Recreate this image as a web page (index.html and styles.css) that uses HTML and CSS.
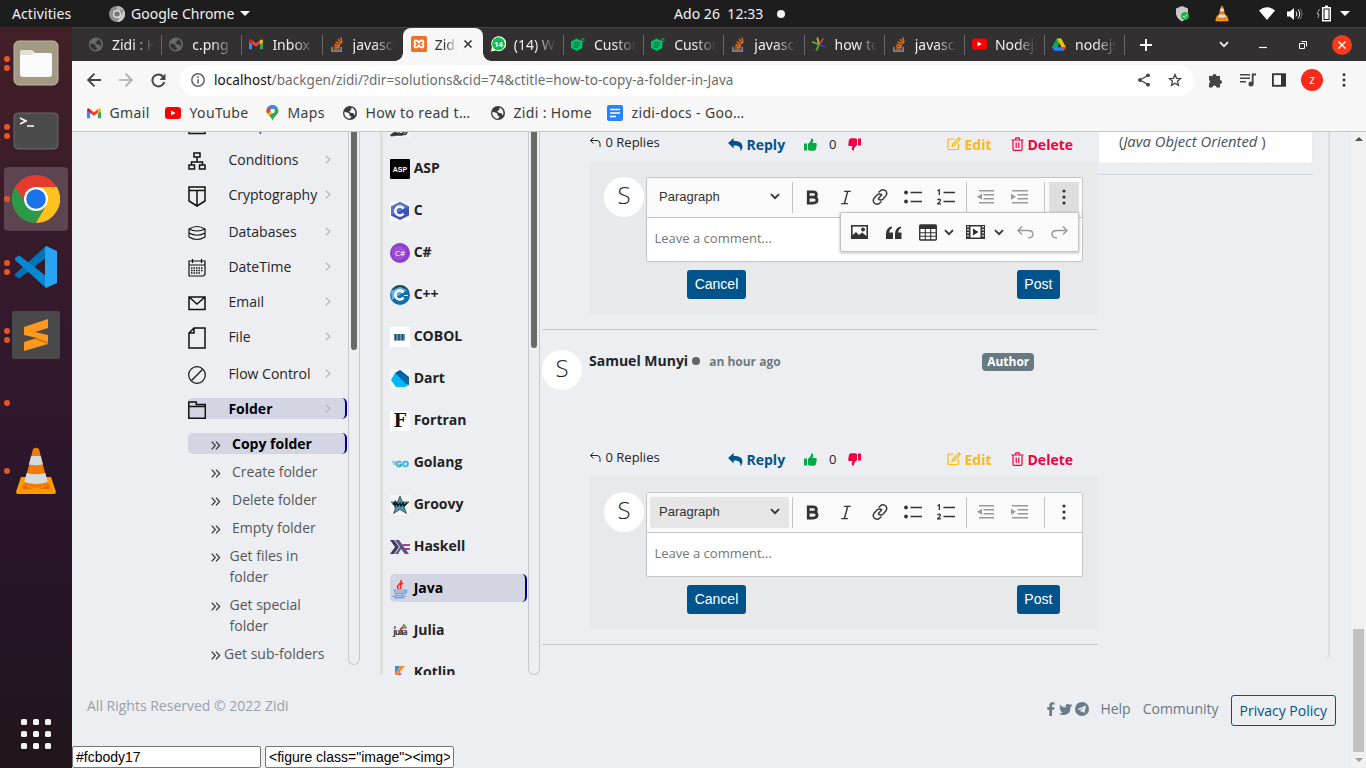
FILE: index.html
```html
<!DOCTYPE html>
<html lang="en">
<head>
<meta charset="utf-8">
<title>Zidi : Home</title>
<link rel="stylesheet" href="styles.css">
</head>
<body>
<svg class="defs" aria-hidden="true">
  <symbol id="globe" viewBox="0 0 16 16"><circle cx="8" cy="8" r="8" fill="currentColor"/><path d="M2 6.500C4 7.500 5.500 7 7 8.500S6 11 8.500 11.500 8 14 8 14.500A6.500 6.500 0 0 1 1.600 7zM10 1.800C9 4 10 4.500 8 5.500S9 8 11 8s1 2.500 2.500 2.500A6.500 6.500 0 0 0 10 1.800z" fill="var(--hole)"/></symbol>
  <symbol id="gmail" viewBox="0 0 16 12"><path d="M0 2v9.500h3.500V5z" fill="#4285f4"/><path d="M16 2v9.500h-3.500V5z" fill="#34a853"/><path d="M0 2Q0 0 2 0l6 4.500L14 0v4L8 8.500 0 3z" fill="#ea4335"/><path d="M12.500 1q3.500-2 3.500 1.500v1L12.500 6z" fill="#fbbc04"/><path d="M0 2.500L3.500 5V2L1 .300z" fill="#c5221f"/></symbol>
  <symbol id="youtube" viewBox="0 0 16 12"><rect width="16" height="12" rx="3" fill="red"/><path d="M6 3.500v5L10.500 6z" fill="#fff"/></symbol>
  <symbol id="stack" viewBox="0 0 14 16"><path d="M1.500 10.500v4.500h10v-4.500" fill="none" stroke="#9aa0a6" stroke-width="1.300"/><path d="M3.500 13h6M3.700 10.500l6 .700M4.300 8l5.800 1.600M5.500 5l5.200 3M8 2.300l3.800 4.700M11 .500l1.500 5.500" stroke="#f4701c" stroke-width="1.400"/></symbol>
  <symbol id="hex" viewBox="0 0 16 16"><path d="M6.500 1L13 4.500v7.500L6.500 15.500 0 12V4.500z" fill="#00c167"/><path d="M3 6h7M3 8.500h7M3 11h5" stroke="#0b6b40" stroke-width="1.200"/><circle cx="13.500" cy="3" r="1.700" fill="none" stroke="#00c167"/></symbol>
  <symbol id="cone" viewBox="0 0 42 48"><path d="M6 30h30l5 15q0 2-2 2H3q-2 0-2-2z" fill="#ff9a00"/><path d="M8 37q13 10 26 0l1 5H7z" fill="#e86a00"/><path d="M18 2q3-2.500 6 0l9 36q-12 6-24 0z" fill="#f07c00"/><path d="M16.200 9h9.600l2.100 8.500q-7 1.500-14 0z" fill="#d5dade"/><path d="M11.700 26q9.500 2.500 18.600 0l2.500 9q-12 4-23.600 0z" fill="#d5dade"/></symbol>
  <symbol id="chev" viewBox="0 0 6 10"><path d="M.500.700L5 5 .500 9.300" fill="none" stroke="currentColor" stroke-width="1.300"/></symbol>
  <symbol id="caret" viewBox="0 0 10 7"><path d="M1 1.200l4 4 4-4" fill="none" stroke="currentColor" stroke-width="1.800"/></symbol>
  <symbol id="dbl" viewBox="0 0 10 9"><path d="M.700.700L4.300 4.500.700 8.300M5 .700l3.600 3.800L5 8.300" fill="none" stroke="currentColor" stroke-width="1.200"/></symbol>
  <symbol id="turn" viewBox="0 0 11 11"><path d="M3.500.500l-3 3 3 3M.500 3.500h6.500q3 0 3 3V10" fill="none" stroke="currentColor" stroke-width="1"/></symbol>
  <symbol id="reply" viewBox="0 0 16 14"><path d="M0 5.500L6 0v3.300c6 0 9.500 1.700 9.500 6 0 2-1 3.700-2.300 4.600C14 10 12 8 6 8v3.200z" fill="currentColor"/></symbol>
  <symbol id="thumb" viewBox="0 0 13 13"><path d="M0 5.500h3v7H0zM4 6l3-3.300V.600q2.300-.500 2.300 2L8.500 5H12q1.200.600.600 2l-.400 3.500q-.500 2-2 2.200H6L4 12z" fill="currentColor"/></symbol>
  <symbol id="edit" viewBox="0 0 14 14"><path d="M7 2H2q-1 0-1 1v8.500q0 1 1 1h8.500q1 0 1-1V7M11.800.800l1.500 1.400L7 8.700l-2 .600.600-2z" fill="none" stroke="currentColor" stroke-width="1.200"/></symbol>
  <symbol id="trash" viewBox="0 0 13 14"><path d="M.500 3h12M2 3v9.300q0 1 1 1h7q1 0 1-1V3M4.200 3L5 .800h3L8.800 3M5.200 5.500V11M7.800 5.500V11" fill="none" stroke="currentColor" stroke-width="1.200"/></symbol>
  <symbol id="bold" viewBox="0 0 14 16"><path d="M3 2.800h4.300q3.400 0 3.400 2.500 0 2.200-3.200 2.300H3.500h4.300q3.500.200 3.500 2.800 0 2.800-3.800 2.800H3z" fill="none" stroke="currentColor" stroke-width="2.600"/></symbol>
  <symbol id="italic" viewBox="0 0 12 16"><path d="M4 1.500h7M1 14.500h7M7.800 1.500L4.300 14.500" fill="none" stroke="currentColor" stroke-width="1.500"/></symbol>
  <symbol id="link" viewBox="0 0 16 16"><path d="M6.500 3.500L8.500 1.700Q11.500-.300 14 2.300q1.700 2.500-.300 4.700l-2.500 3q-2.500 2-5 0M9.500 12.500l-2 1.800q-3 2-5.500-.600-1.700-2.500.300-4.700L5 6q2.500-2 5 0M6 10l4-4.500" fill="none" stroke="currentColor" stroke-width="1.400"/></symbol>
  <symbol id="bul" viewBox="0 0 18 14"><circle cx="2" cy="2.500" r="1.900" fill="currentColor"/><circle cx="2" cy="11.500" r="1.900" fill="currentColor"/><path d="M6.500 2.500H18M6.500 11.500H18" stroke="currentColor" stroke-width="1.500"/></symbol>
  <symbol id="num" viewBox="0 0 18 16"><path d="M6.500 3.500H18M6.500 12.500H18" stroke="currentColor" stroke-width="1.500"/><path d="M.500 1.800L2.300.800V6M.500 11q1.800-1.800 3 0 0 1.500-3 3.800h3.500" fill="none" stroke="currentColor" stroke-width="1.300"/></symbol>
  <symbol id="outd" viewBox="0 0 18 14"><path d="M2 .800h15M6.500 4.800H17M6.500 8.800H17M2 12.800h15" stroke="currentColor" stroke-width="1.400"/><path d="M5 3.800v6L0 6.800z" fill="currentColor"/></symbol>
  <symbol id="ind" viewBox="0 0 18 14"><path d="M1 .800h16M6.500 4.800H17M6.500 8.800H17M1 12.800h16" stroke="currentColor" stroke-width="1.400"/><path d="M0 3.800v6l5-3z" fill="currentColor"/></symbol>
  <symbol id="dots" viewBox="0 0 4 16"><circle cx="2" cy="2" r="1.600" fill="currentColor"/><circle cx="2" cy="8" r="1.600" fill="currentColor"/><circle cx="2" cy="14" r="1.600" fill="currentColor"/></symbol>
  <symbol id="undo" viewBox="0 0 17 13"><path d="M5 .500L1 4.500l4 4M1 4.500h10q5 0 5 3.700t-5 3.700" fill="none" stroke="currentColor" stroke-width="1.400"/></symbol>
</svg>

<header class="topbar">
  <span class="activities">Activities</span>
  <svg class="app-icon" viewBox="0 0 16 16"><circle cx="8" cy="8" r="8" fill="#8f8f8f"/><path d="M8 0a8 8 0 0 1 7 4H8z" fill="#b5b5b5"/><path d="M15 4a8 8 0 0 1-7 12l3.500-6z" fill="#c8c8c8"/><circle cx="8" cy="8" r="3.900" fill="#eee"/><circle cx="8" cy="8" r="2.800" fill="#777"/></svg>
  <span class="app-name">Google Chrome</span>
  <i class="tri"></i>
  <span class="clock">Ado 26&nbsp; 12:33</span><i class="notif"></i>
  <div class="tray">
    <svg width="14" height="16" viewBox="0 0 14 16"><path d="M6 0l6 2.500V8q-1 5-6 7.500Q1 13 0 8V2.500z" fill="#c9c9c9"/><circle cx="9" cy="10" r="4" fill="#26b04b"/><path d="M7 10l1.500 1.500L11 8.500" stroke="#fff" fill="none"/></svg>
    <svg width="14" height="17"><use href="#cone"/></svg>
    <svg width="16" height="13" viewBox="0 0 16 13"><path d="M0 3.500Q8-3 16 3.500L8 13z" fill="#fff"/></svg>
    <svg width="16" height="14" viewBox="0 0 16 14"><path d="M0 4.500h3L7 1v12L3 9.500H0z" fill="#fff"/><path d="M9 4.500q2 2.500 0 5M11 2.500q3.500 4.500 0 9" stroke="#fff" fill="none"/><path d="M13 1.500q4 5.500 0 11" stroke="#777" fill="none"/></svg>
    <svg width="15" height="17" viewBox="0 0 15 17"><path d="M3.500 4L1 9h2l-1 4" stroke="#aaa" fill="none"/><path d="M6.700 2.700h7.600v13H6.700zM9 1.200h3" stroke="#fff" stroke-width="1.500" fill="none"/><path d="M8.500 4.500h4v9.500h-4z" fill="#fff"/></svg>
    <i class="tri"></i>
  </div>
</header>

<div class="desktop">
  <nav class="dock">
    <div class="app"><span class="run"><i></i><i></i></span><svg width="46" height="46" viewBox="0 0 46 46"><rect x="1" y="1" width="44" height="44" rx="5" fill="#a29a82" stroke="#c0b9a2"/><path d="M7 12q0-2 2-2h10l3 3h15q2 0 2 2v5H7z" fill="#e4e0d3"/><path d="M7 17q0-2 2-2h9l4-2h15q2 0 2 2v19q0 3-3 3H10q-3 0-3-3z" fill="#fafafa"/></svg></div>
    <div class="app"><span class="run"><i></i><i></i></span><svg width="46" height="38" viewBox="0 0 46 38"><rect x="1" y="1" width="44" height="36" rx="4" fill="#4b4b4b" stroke="#6b6b6b"/><path d="M7 6l6 3-6 3M14 14h7" stroke="#fff" stroke-width="1.600" fill="none"/></svg></div>
    <div class="app current"><span class="run"><i></i></span><svg width="48" height="48" viewBox="0 0 48 48"><circle cx="24" cy="24" r="24" fill="#e33b2e"/><path d="M3.200 12A24 24 0 0 0 24 48l10-18-10 4-10-5z" fill="#2b9a48"/><path d="M24 12h20.800A24 24 0 0 1 24 48l10.400-18z" fill="#fcc31e"/><circle cx="24" cy="24" r="12" fill="#fff"/><circle cx="24" cy="24" r="9.800" fill="#1a73e8"/></svg></div>
    <div class="app"><span class="run"><i></i><i></i></span><svg width="42" height="42" viewBox="0 0 42 42"><path d="M31 0L0 28q-1 1 0 2l3 2q1 1 2 0L31 12z" fill="#0070b8"/><path d="M31 42L0 14q-1-1 0-2l3-2q1-1 2 0l26 20z" fill="#0788d2"/><path d="M31 0l11 5v32l-11 5-1-2V2z" fill="#27a5f2"/></svg></div>
    <div class="app"><span class="run"><i></i><i></i></span><svg width="48" height="48" viewBox="0 0 48 48"><rect width="48" height="48" rx="2" fill="#494949"/><path d="M12 16l24-8v9l-13 4 13 3v9l-24 7v-9l13-4-13-3z" fill="#ff9820"/><path d="M25 27l11 4v2l-14-5z" fill="#d97706"/></svg></div>
    <div class="app"><span class="run"><i></i></span></div>
    <div class="app"><span class="run"><i></i></span><svg width="42" height="48"><use href="#cone"/></svg></div>
    <div class="launcher"><i></i><i></i><i></i><i></i><i></i><i></i><i></i><i></i><i></i></div>
  </nav>

  <div class="browser">
    <div class="tabs">
      <div class="tab grey"><svg><use href="#globe"/></svg><span>Zidi : Home</span></div>
      <div class="tab grey"><svg><use href="#globe"/></svg><span>c.png</span></div>
      <div class="tab"><svg><use href="#gmail"/></svg><span>Inbox (1)</span></div>
      <div class="tab nosep"><svg><use href="#stack"/></svg><span>javascript</span></div>
      <div class="tab active"><svg viewBox="0 0 16 16"><rect width="16" height="16" rx="1.500" fill="#f0702a"/><path d="M4.500 4.500Q6.500 4.200 8 6.500 9.500 4.200 11.500 4.500q2 1.500 0 3.500 2 2 0 3.500Q9.500 11.800 8 9.500 6.500 11.800 4.500 11.500q-2-1.500 0-3.500-2-2 0-3.500z" fill="none" stroke="#fff" stroke-width="1.800"/></svg><span>Zidi</span><svg class="x" viewBox="0 0 10 10"><path d="M1.500 1.500l7 7m0-7l-7 7" stroke="#333" stroke-width="1.600"/></svg></div>
      <div class="tab"><svg viewBox="0 0 16 16" class="wide"><path d="M0 16l1-5A8 8 0 1 1 5 15z" fill="#fff"/><circle cx="8" cy="7.800" r="6.900" fill="#0fc144"/><text x="8" y="10.800" text-anchor="middle" class="wa">14</text></svg><span>(14) Wh</span></div>
      <div class="tab"><svg><use href="#hex"/></svg><span>Custom</span></div>
      <div class="tab"><svg><use href="#hex"/></svg><span>Custom</span></div>
      <div class="tab"><svg><use href="#stack"/></svg><span>javascript</span></div>
      <div class="tab"><svg viewBox="0 0 16 16"><path d="M8 8L0 5" stroke="#5ea84a" stroke-width="2"/><path d="M8 8l5-7" stroke="#b9415c" stroke-width="2"/><path d="M8 8L6 0" stroke="#c4b13d" stroke-width="2"/><path d="M8 8l7 3" stroke="#513a99" stroke-width="2"/><path d="M8 8l-3 7" stroke="#4f9d38" stroke-width="2.500"/></svg><span>how to c</span></div>
      <div class="tab"><svg><use href="#stack"/></svg><span>javascript</span></div>
      <div class="tab"><svg class="wide"><use href="#youtube"/></svg><span>Nodejs</span></div>
      <div class="tab"><svg viewBox="0 0 16 14"><path d="M5.500 0h5L5 14 0 10z" fill="#0fa757"/><path d="M5.500 0h5L16 10h-5z" fill="#fbbc04"/><path d="M0 10h16l-2.700 4H2.700z" fill="#2684fc"/><path d="M11 10h5l-2.700 4z" fill="#ea4335"/></svg><span>nodejs</span></div>
      <div class="newtab"><svg width="12" height="12" viewBox="0 0 12 12"><path d="M6 0v12M0 6h12" stroke="#fff" stroke-width="1.900"/></svg></div>
      <div class="winctl">
        <svg width="10" height="7"><use href="#caret"/></svg>
        <svg width="8" height="8" viewBox="0 0 8 8"><path d="M0 6.500h8" stroke="#fff" stroke-width="1.200"/></svg>
        <svg width="8" height="8" viewBox="0 0 8 8"><path d="M.500 2.500h5v5h-5zM2.500.500h5v5" stroke="#fff" fill="none"/></svg>
        <span class="close"><svg width="8" height="8" viewBox="0 0 8 8"><path d="M.500.500l7 7m0-7l-7 7" stroke="#fff" stroke-width="1.400"/></svg></span>
      </div>
    </div>
    <div class="toolbar">
      <svg width="14" height="14" viewBox="0 0 14 14"><path d="M14 7H1.500M7.500.700L1.200 7l6.300 6.300" stroke="#444" stroke-width="1.900" fill="none"/></svg>
      <svg width="14" height="14" viewBox="0 0 14 14"><path d="M0 7h12.500M6.500.700L12.800 7l-6.300 6.300" stroke="#a8a8a8" stroke-width="1.700" fill="none"/></svg>
      <svg width="15" height="15" viewBox="0 0 15 15"><path d="M13.200 9A6 6 0 1 1 12 3.500L13 4.800" stroke="#444" stroke-width="2" fill="none"/><path d="M14.500.500V7H8.500z" fill="#444"/></svg>
      <div class="omni">
        <svg width="14" height="14" viewBox="0 0 14 14"><circle cx="7" cy="7" r="6.200" fill="none" stroke="#5f6368" stroke-width="1.500"/><path d="M7 6.200v4.300M7 3.300V5" stroke="#5f6368" stroke-width="1.600"/></svg>
        <span class="url"><b>localhost</b>/backgen/zidi/?dir=solutions&amp;cid=74&amp;ctitle=how-to-copy-a-folder-in-Java</span>
        <svg width="12" height="14" viewBox="0 0 12 14"><path d="M10 2.500L2 7l8 4.500" stroke="#444" stroke-width="1.300" fill="none"/><circle cx="10" cy="2.300" r="1.900" fill="#444"/><circle cx="2" cy="7" r="1.900" fill="#444"/><circle cx="10" cy="11.700" r="1.900" fill="#444"/></svg>
        <svg width="14" height="14" viewBox="0 0 14 14"><path d="M7 1.500l1.600 3.800 4.100.300-3.200 2.700 1 4L7 10.200l-3.500 2.100 1-4L1.300 5.600l4.100-.300z" stroke="#444" stroke-width="1.300" fill="none"/></svg>
      </div>
      <div class="tools">
        <svg width="15" height="15" viewBox="0 0 15 15"><path d="M1 3h3.500a2 2 0 1 1 4 0H12v4a2 2 0 1 1 0 4v3.500H8.500a2 2 0 0 0-4 0H1v-4a2 2 0 0 0 0-3.500z" fill="#444"/></svg>
        <svg width="16" height="14" viewBox="0 0 16 14"><path d="M0 1.800h10M0 5.300h10M0 8.800h6" stroke="#444" stroke-width="1.600"/><path d="M12.700 11V1.500H16" stroke="#444" stroke-width="1.800" fill="none"/><circle cx="11" cy="11" r="2.500" fill="#444"/></svg>
        <svg width="14" height="14" viewBox="0 0 14 14"><rect x=".9" y="1.200" width="12.200" height="11.600" fill="none" stroke="#333" stroke-width="1.800"/><path d="M9 1h4.500v12H9z" fill="#333"/></svg>
        <span class="me">z</span>
        <svg class="dk" width="4" height="14"><use href="#dots"/></svg>
      </div>
    </div>
    <div class="bookmarks">
      <span><svg width="14" height="11"><use href="#gmail"/></svg><b>Gmail</b></span>
      <span><svg width="16" height="12"><use href="#youtube"/></svg><b>YouTube</b></span>
      <span><svg width="13" height="16" viewBox="0 0 12 16"><path d="M6 0a6 6 0 0 1 6 6c0 4-5 5-6 10C5 11 0 10 0 6a6 6 0 0 1 6-6z" fill="#34a853"/><path d="M6 0a6 6 0 0 0-4.600 2.100L6 6l4-4.500A6 6 0 0 0 6 0z" fill="#4285f4"/><path d="M1.400 2.100A6 6 0 0 0 .600 8.500L6 6z" fill="#ea4335"/><path d="M.600 8.500L2.600 11.400 9.500 3.400 6 6z" fill="#fbbc04"/><circle cx="6" cy="6" r="2.200" fill="#fff"/></svg><b>Maps</b></span>
      <span><svg width="14" height="14"><use href="#globe"/></svg><b>How to read t…</b></span>
      <span><svg width="14" height="14"><use href="#globe"/></svg><b>Zidi : Home</b></span>
      <span><svg width="16" height="16" viewBox="0 0 16 16"><rect width="16" height="16" rx="2" fill="#2684fc"/><path d="M3 4.500h10M3 8h10M3 11.500h6" stroke="#fff" stroke-width="1.600"/></svg><b>zidi-docs - Goo…</b></span>
    </div>

    <div class="viewport">
      <div class="page">
        <main class="main">
          <aside class="cats">
            <ul class="catlist">
              <li class="g14"><svg class="ci" viewBox="0 0 18 24"><path d="M1 8h16v11.500H1z" class="st"/></svg><span>Comparison</span></li>
              <li class="g14"><svg class="ci" viewBox="0 0 18 24"><path d="M6 4h6v4H6zM9 8v4M3.500 16v-3h11v3M9 12v1M1 16h5.500v4H1zM11.500 16H17v4h-5.500z" class="st"/></svg><span>Conditions</span><svg class="cv"><use href="#chev"/></svg></li>
              <li class="g16"><svg class="ci" viewBox="0 0 18 24"><path d="M1 3h16v14l-8 5-8-5zM1 6.500h16M9 6.500V22" class="st"/></svg><span>Cryptography</span><svg class="cv"><use href="#chev"/></svg></li>
              <li class="g14"><svg class="ci" viewBox="0 0 18 24"><path d="M1 8q8-5 16 0v8q-8 5-16 0zM1 8q8 4 16 0M1 12q8 4.500 16 0" class="st thin"/></svg><span>Databases</span><svg class="cv"><use href="#chev"/></svg></li>
              <li class="g14"><svg class="ci" viewBox="0 0 18 24"><path d="M1 5h16v13.500l-1.500 1.500H1zM1 9h16M4.500 3v4M13.500 3v4" class="st thin"/><path d="M3 12h12.500M3 14.500h12.500M3 17h9" class="st" stroke-dasharray="1.500 1"/></svg><span>DateTime</span><svg class="cv"><use href="#chev"/></svg></li>
              <li class="g14"><svg class="ci" viewBox="0 0 18 24"><path d="M1 6h16v12.500H1zM1 6l8 7 8-7" class="st"/></svg><span>Email</span><svg class="cv"><use href="#chev"/></svg></li>
              <li class="g16"><svg class="ci" viewBox="0 0 18 24"><path d="M6 2h11v20H1V7zM6 2v5H1" class="st"/></svg><span>File</span><svg class="cv"><use href="#chev"/></svg></li>
              <li class="g14"><svg class="ci" viewBox="0 0 18 24"><circle cx="9" cy="12" r="8.300" class="st thin"/><path d="M3.500 17.500l11-11" class="st thin"/></svg><span>Flow Control</span><svg class="cv"><use href="#chev"/></svg></li>
              <li class="g14 on"><svg class="ci" viewBox="0 0 18 24"><path d="M.800 20.200V4h7.500v2.500h9v13.700zM.800 8.500h16.500" class="st"/></svg><span>Folder</span><svg class="cv"><use href="#chev"/></svg></li>
            </ul>
            <ul class="sublist">
              <li class="on"><svg><use href="#dbl"/></svg><span>Copy folder</span></li>
              <li><svg><use href="#dbl"/></svg><span>Create folder</span></li>
              <li><svg><use href="#dbl"/></svg><span>Delete folder</span></li>
              <li><svg><use href="#dbl"/></svg><span>Empty folder</span></li>
              <li class="two"><svg><use href="#dbl"/></svg><span>Get files in<br>folder</span></li>
              <li class="two"><svg><use href="#dbl"/></svg><span>Get special<br>folder</span></li>
              <li class="sub"><svg><use href="#dbl"/></svg><span>Get sub-folders</span></li>
            </ul>
          </aside>
          <div class="track t1"><i></i></div>
          <aside class="langs">
            <ul>
              <li><svg viewBox="0 0 20 20"><rect width="20" height="20" fill="#f5f5f5"/><path d="M1 18l3-2-1 2 3-2-1 2 4-2 2 1 7-4-2 4-5 1z" fill="none" stroke="#333" stroke-width="1.500"/></svg></li>
              <li><svg viewBox="0 0 20 20"><rect width="20" height="20" rx="1" fill="#000"/><text x="10" y="13" text-anchor="middle" class="asp">ASP</text></svg>ASP</li>
              <li><svg viewBox="0 0 20 20"><rect width="20" height="20" fill="#f7f7f8"/><path d="M10 1l9 4.500v9L10 19l-9-4.500v-9z" fill="#3b55b5"/><path d="M10 1l9 4.500L1 14.500v-9z" fill="#5c76c8"/><path d="M13.500 7.500a4.500 4.500 0 1 0 0 5" fill="none" stroke="#fff" stroke-width="2.500"/></svg>C</li>
              <li><svg viewBox="0 0 20 20"><circle cx="10" cy="10" r="10" fill="#8c3fca"/><circle cx="9" cy="10" r="7" fill="#9b50da"/><text x="10" y="13" text-anchor="middle" class="cs">C#</text></svg>C#</li>
              <li><svg viewBox="0 0 20 20"><circle cx="10" cy="10" r="10" fill="#126ea8"/><path d="M1 6a10 10 0 0 1 18 0l-9-4z" fill="#34474f"/><path d="M1 6l9-4 7 3L2 15z" fill="#64b2e0"/><path d="M13.500 7.500a4.500 4.500 0 1 0 0 5" fill="none" stroke="#fff" stroke-width="2.500"/><path d="M14 10.500h4" stroke="#fff"/></svg>C++</li>
              <li><svg viewBox="0 0 20 20"><rect width="20" height="20" fill="#fff"/><rect x="4" y="7" width="11" height="6.500" fill="#6395ad"/><path d="M5.500 7v6.500M9 7v6.500M12.500 7v6.500" stroke="#184c68" stroke-width="1.500"/></svg>COBOL</li>
              <li><svg viewBox="0 0 20 20"><rect width="20" height="20" fill="#f5f6f7"/><path d="M5 4l5-3 9 7v8h-4z" fill="#00579d"/><path d="M5 4L1 11l5 7h9l4-2z" fill="#02b9f4"/><path d="M5 4l11 11 3-1V9l-8-5z" fill="#0968a8"/></svg>Dart</li>
              <li><svg viewBox="0 0 20 20"><rect width="20" height="20" fill="#fff"/><text x="10" y="16" text-anchor="middle" class="fo">F</text></svg>Fortran</li>
              <li><svg viewBox="0 0 20 20"><path d="M2 9h4M3.500 11H6" stroke="#25b5d8"/><text x="12" y="13.500" text-anchor="middle" class="go">GO</text></svg>Golang</li>
              <li><svg viewBox="0 0 20 20"><rect width="20" height="20" fill="#f5f5f5"/><path d="M10 1l2.500 6H19l-5 4.500 2.500 7L10 14.500l-6.500 4 2.500-7L1 7h6.500z" fill="#4898b0" stroke="#333" stroke-width=".7"/><path d="M3 10l2-3v4l2-3 1 3 2-3 1 3 2-3 1 3 3-3" stroke="#111" fill="none" stroke-width="1.300"/></svg>Groovy</li>
              <li><svg viewBox="0 0 20 20"><path d="M0 3h4l5 7-5 7H0l5-7z" fill="#453a62"/><path d="M5 3h4l10 14h-4l-4-5-3 5H5l5-7z" fill="#5e5086"/><path d="M12.500 8H20M15 12h5" stroke="#9a4a92" stroke-width="2"/></svg>Haskell</li>
              <li class="on"><svg viewBox="0 0 20 20"><path d="M11 1q1 2-2 4.500T9 10M13 4q-4 2-2 6" fill="none" stroke="#f0291f" stroke-width="1.500"/><path d="M4 11h11v2H5zM15 11q3 0 1 3l-2 1M5 14.500h8v2H6zM2 17q8 2.500 14 0M4 19h10" fill="none" stroke="#6da0e0" stroke-width="1.200"/></svg>Java</li>
              <li><svg viewBox="0 0 20 20"><text x="10" y="14" text-anchor="middle" class="ju">julia</text><circle cx="12.500" cy="6.500" r="1.300" fill="#cb3c33"/><circle cx="15.500" cy="6.500" r="1.300" fill="#9558b2"/><circle cx="14" cy="4.500" r="1.300" fill="#389826"/><circle cx="5" cy="6" r="1" fill="#4063d8"/></svg>Julia</li>
              <li><svg viewBox="0 0 20 20"><path d="M5 3h5L5 11z" fill="#2795d8"/><path d="M10 3h5L5 14V11z" fill="#f5892a"/><path d="M5 14l5-5 5 9H5z" fill="#c756a8"/></svg>Kotlin</li>
            </ul>
          </aside>
          <div class="track t2"><i></i></div>

          <section class="comments">
            <div class="acts">
              <span class="count"><svg width="11" height="11"><use href="#turn"/></svg>0 Replies</span>
              <a class="blue"><svg width="15" height="13"><use href="#reply"/></svg>Reply</a>
              <svg class="green" width="13" height="13"><use href="#thumb"/></svg><span class="votes">0</span><svg class="red down" width="13" height="13"><use href="#thumb"/></svg>
              <a class="yellow"><svg width="14" height="14"><use href="#edit"/></svg>Edit</a>
              <a class="red"><svg width="13" height="14"><use href="#trash"/></svg>Delete</a>
            </div>
            <div class="compose">
              <div class="avatar">S</div>
              <div class="editor">
                <div class="ebar">
                  <span class="drop">Paragraph<svg width="10" height="7"><use href="#caret"/></svg></span><i></i>
                  <svg width="15" height="17"><use href="#bold"/></svg><svg width="12" height="15"><use href="#italic"/></svg><svg width="16" height="16"><use href="#link"/></svg><svg width="18" height="14"><use href="#bul"/></svg><svg width="18" height="16"><use href="#num"/></svg><i></i>
                  <svg class="dis" width="18" height="14"><use href="#outd"/></svg><svg class="dis" width="18" height="14"><use href="#ind"/></svg><i class="last"></i>
                  <span class="more pressed"><svg width="4" height="16"><use href="#dots"/></svg></span>
                </div>
                <div class="etext">Leave a comment...</div>
                <div class="popup">
                  <svg width="17" height="14" viewBox="0 0 17 14"><rect x=".8" y=".8" width="15.400" height="12.400" fill="#fff" stroke="#333" stroke-width="1.600"/><path d="M1 13V10.500L5 7l3 3 3-2.500 5 4V13z" fill="#333"/><circle cx="12" cy="4.500" r="2" fill="#333"/></svg>
                  <svg width="16" height="13" viewBox="0 0 16 13"><path d="M6 .500Q0 1.500 0 8v5h7V6.500H3Q3.500 3 6 2zM15 .500Q9 1.500 9 8v5h6.500V6.500H12Q12.500 3 15 2z" fill="#333"/></svg>
                  <svg width="18" height="17" viewBox="0 0 18 17"><rect x=".7" y="1" width="16.600" height="15" rx="1" fill="#fff" stroke="#333" stroke-width="1.400"/><path d="M1 1h16v4H1z" fill="#333"/><path d="M6.300 4v12M11.700 4v12M1 8.700h16M1 12.300h16" stroke="#333" stroke-width="1.100"/></svg>
                  <svg width="10" height="7"><use href="#caret"/></svg>
                  <svg width="19" height="14" viewBox="0 0 19 14"><path d="M0 0h19v14H0z" fill="#333"/><path d="M4.500 1.500h10v11h-10z" fill="#fff"/><path d="M7 3.500v7L12.500 7z" fill="#333"/><path d="M2 1v12M17 1v12" stroke="#fff" stroke-width="1.500" stroke-dasharray="1.500 1.500"/></svg>
                  <svg width="10" height="7"><use href="#caret"/></svg>
                  <svg class="dis" width="17" height="13"><use href="#undo"/></svg>
                  <svg class="dis flip" width="17" height="13"><use href="#undo"/></svg>
                </div>
              </div>
              <div class="btns"><button>Cancel</button><button>Post</button></div>
            </div>
            <hr>
            <div class="chead"><div class="avatar">S</div><strong>Samuel Munyi</strong><i></i><time>an hour ago</time><span class="badge">Author</span></div>
            <div class="acts">
              <span class="count"><svg width="11" height="11"><use href="#turn"/></svg>0 Replies</span>
              <a class="blue"><svg width="15" height="13"><use href="#reply"/></svg>Reply</a>
              <svg class="green" width="13" height="13"><use href="#thumb"/></svg><span class="votes">0</span><svg class="red down" width="13" height="13"><use href="#thumb"/></svg>
              <a class="yellow"><svg width="14" height="14"><use href="#edit"/></svg>Edit</a>
              <a class="red"><svg width="13" height="14"><use href="#trash"/></svg>Delete</a>
            </div>
            <div class="compose">
              <div class="avatar">S</div>
              <div class="editor">
                <div class="ebar">
                  <span class="drop hover">Paragraph<svg width="10" height="7"><use href="#caret"/></svg></span><i></i>
                  <svg width="15" height="17"><use href="#bold"/></svg><svg width="12" height="15"><use href="#italic"/></svg><svg width="16" height="16"><use href="#link"/></svg><svg width="18" height="14"><use href="#bul"/></svg><svg width="18" height="16"><use href="#num"/></svg><i></i>
                  <svg class="dis" width="18" height="14"><use href="#outd"/></svg><svg class="dis" width="18" height="14"><use href="#ind"/></svg><i class="last"></i>
                  <span class="more"><svg width="4" height="16"><use href="#dots"/></svg></span>
                </div>
                <div class="etext">Leave a comment...</div>
              </div>
              <div class="btns"><button>Cancel</button><button>Post</button></div>
            </div>
            <hr>
          </section>

          <aside class="related">
            <div class="card">(<em>Java Object Oriented</em> )</div>
            <hr>
          </aside>
        </main>
        <footer class="footer">
          <span class="rights">All Rights Reserved © 2022 Zidi</span>
          <svg width="8" height="14" viewBox="0 0 8 14"><path d="M2.300 14V7.800H.200V5.300h2.100V3.500Q2.300.300 5.500.200h2v2.300H6Q5 2.600 5 3.700v1.600h2.500L7.100 7.800H5V14z" fill="#687c8c"/></svg>
          <svg width="13" height="11" viewBox="0 0 14 12"><path d="M14 1.500l-1.500 1.700Q12.500 12 4.500 12 2 12 0 10.500q2.500 0 4-1.200Q2 9 1.500 7.300h1.200Q.500 6.500.500 4.300l1.200.300Q0 3 1 .700 3.500 3.700 7 3.700 6.700 0 9.700 0q1.300 0 2 .900L13.500.200z" fill="#687c8c"/></svg>
          <svg width="14" height="14" viewBox="0 0 14 14"><circle cx="7" cy="7" r="7" fill="#687c8c"/><path d="M2.500 7L11 3.500 9.500 11 7 9.300 5.700 10.500 5.500 8.500 9 5.500 4.700 8z" fill="#edeef2"/></svg>
          <a class="help">Help</a><a>Community</a><a class="privacy">Privacy Policy</a>
        </footer>
        <div class="fields"><input type="text" value="#fcbody17"><input type="text" value='&lt;figure class="image"&gt;&lt;img&gt;'></div>
      </div>
      <div class="scroll"><b class="up"></b><i></i><b class="dn"></b></div>
    </div>
  </div>
</div>
</body>
</html>
```

FILE: styles.css
```css
* { box-sizing: border-box; }
body { margin: 0; width: 1366px; height: 768px; overflow: hidden; display: flex; flex-direction: column; font: 14px/21px "Open Sans", "Noto Sans", sans-serif; color: #212529; background: #edeef2; }
ul { list-style: none; margin: 0; padding: 0; }
svg { display: block; flex: none; }
hr { margin: 0; border: 0; height: 1px; background: #c6c7ca; }
.defs { position: absolute; width: 0; height: 0; }

/* desktop top bar */
.topbar { flex: none; height: 27px; display: flex; align-items: center; background: #1d1d1d; color: #f2f2f2; font: 14px/26px "Noto Sans", sans-serif; }
.activities { width: 97px; padding-left: 12px; letter-spacing: .1px; }
.app-icon { width: 16px; height: 16px; margin-left: 12px; }
.app-name { width: 104px; margin-left: 6px; white-space: nowrap; }
.tri { border: 5px solid transparent; border-top-color: #fff; border-bottom: 0; margin-left: 5px; }
.clock { margin-left: 424px; width: 91px; white-space: nowrap; letter-spacing: .05px; }
.notif { width: 8px; height: 8px; border-radius: 4px; background: #f2f2f2; margin-left: 12px; }
.tray { margin-left: 391px; display: grid; grid-template-columns: 39px 44px 28px 29px 24px 10px; align-items: center; }
.tray .tri { margin: 0; }

.desktop { flex: 1; display: flex; min-height: 0; }
.dock { width: 72px; flex: none; padding-top: 2px; display: flex; flex-direction: column; background: linear-gradient(#431f27, #31182c 45%, #28152a 70%, #21151c); }
.app { height: 68px; display: flex; align-items: center; justify-content: center; position: relative; }
.app.current::before { content: ""; position: absolute; left: 4px; top: 2px; width: 64px; height: 64px; border-radius: 4px; background: #5c4450; }
.app svg { position: relative; }
.run { position: absolute; left: 4px; top: 0; height: 68px; display: flex; flex-direction: column; justify-content: center; gap: 3px; z-index: 1; }
.run i { width: 6px; height: 6px; border-radius: 3px; background: #e95420; }
.launcher { margin: auto 0 19px 21px; display: grid; grid-template-columns: repeat(3, 6px); gap: 6px; }
.launcher i { height: 6px; border-radius: 1.500px; background: #f4f4f4; }

/* browser frame */
.browser { flex: 1; min-width: 0; display: flex; flex-direction: column; background: #f7f7f7; }
.tabs { height: 34px; flex: none; background: #323031; border-top: 1px solid #444; padding-left: 9px; display: flex; font: 14px/31px "Noto Sans", sans-serif; color: #f0f0f0; }
.tab { width: 80.200px; flex: none; display: flex; align-items: center; position: relative; padding: 0 0 1px 8px; }
.tab svg { width: 14px; height: 15px; margin-right: 9px; }
.tab svg.wide { width: 15px; height: 16px; margin-right: 8px; }
.tab span { width: 42px; overflow: hidden; white-space: nowrap; -webkit-mask-image: linear-gradient(90deg, #000 50%, transparent); mask-image: linear-gradient(90deg, #000 50%, transparent); }
.tab::after { content: ""; position: absolute; right: -1px; top: 7px; width: 1px; height: 20px; background: #686868; }
.tab.nosep::after { display: none; }
.tab.grey svg { color: #666b6e; --hole: #323031; }
.tab.active { background: #f7f7f7; color: #333; border-radius: 8px 8px 0 0; width: 80px; margin-left: 1px; }
.tab.active::before, .tab.active::after { content: ""; position: absolute; bottom: 0; top: auto; width: 8px; height: 8px; background: radial-gradient(circle at 0 0, transparent 7.500px, #f7f7f7 8px); }
.tab.active::before { left: -8px; }
.tab.active::after { right: -8px; transform: scaleX(-1); }
.tab.active svg { width: 16px; height: 16px; margin-right: 8px; }
.tab.active span { width: 22px; }
.tab.active svg.x { width: 10px; height: 10px; margin: 0 0 0 6px; }
.wa { font: bold 8px "Noto Sans", sans-serif; fill: #fff; }
.newtab { width: 44px; display: flex; align-items: center; justify-content: center; }
.winctl { margin-left: 51px; display: grid; grid-template-columns: 40px 40px 33px 20px; align-items: center; }
.close { width: 20px; height: 20px; border-radius: 50%; background: #fb3a1c; display: flex; align-items: center; justify-content: center; }

.toolbar { height: 38px; flex: none; display: flex; align-items: center; padding-left: 15px; }
.toolbar > svg + svg { margin-left: 18px; }
.omni { margin-left: 14px; width: 1014px; height: 31px; border-radius: 16px; background: #fff; display: flex; align-items: center; padding: 0 12px 0 11px; }
.url { flex: 1; margin-left: 9px; font: 13.500px/30px "Noto Sans", sans-serif; letter-spacing: .063px; color: #6b6b6b; white-space: nowrap; }
.url b { font-weight: 400; color: #111; }
.omni svg:nth-of-type(3) { margin-left: 18px; }
.tools { margin-left: 14px; display: grid; grid-template-columns: 32px 32px 29px 41px 4px; align-items: center; }
.dk { color: #333; }
.me { width: 22px; height: 22px; border-radius: 50%; background: #fc2a1a; color: #fff; font: 12px/21px "Noto Sans", sans-serif; text-align: center; }
.bookmarks { height: 33px; flex: none; padding-left: 15px; display: grid; grid-template-columns: 78px 101px 77px 148px 116px 150px; font: 14px/28px "Noto Sans", sans-serif; letter-spacing: .35px; color: #3b3b3b; border-bottom: 1px solid #c4c7c3; align-items: start; --hole: #f7f7f7; padding-bottom: 4px; }
.bookmarks span { display: flex; align-items: center; }
.bookmarks b { font-weight: 400; margin-left: 8.500px; white-space: nowrap; }

/* page */
.viewport { flex: 1; display: flex; min-height: 0; background: #edeef2; }
.page { width: 1279px; display: flex; flex-direction: column; overflow: hidden; }
.main { height: 543px; flex: none; display: flex; overflow: hidden; }
.cats { margin: -18px 0 0 116px; width: 160px; flex: none; }
.catlist li { display: flex; height: 21px; align-items: flex-start; width: 159px; }
.g14 { margin-bottom: 14px; }
.g16 { margin-bottom: 16px; }
.ci { width: 18px; height: 24px; }
.st { fill: none; stroke: #111; stroke-width: 1.500; }
.st.thin { stroke-width: 1.200; }
.catlist span { margin-left: 22.400px; width: 96.600px; white-space: nowrap; }
.cv { width: 6px; height: 9px; margin-top: 6px; color: #b0b2b6; }
.catlist .on, .sublist .on, .langs .on { background: #d4d5e2; border-radius: 5px; border-right: 2px solid #00008b; font-weight: 700; color: #000; }
.sublist { color: #55575b; }
.sublist li { display: flex; align-items: flex-start; width: 159px; margin-bottom: 7px; padding-left: 23px; white-space: nowrap; }
.sublist svg { width: 10px; height: 9px; margin: 8px 11px 0 0; color: #333; }
.sublist .two svg { margin-right: 8.500px; }
.sublist .sub svg { margin-right: 3px; }
.track { width: 12px; flex: none; border: 1px solid #c6c8cb; border-top: 0; border-radius: 0 0 6px 6px; padding-left: 2px; }
.track i { display: block; width: 6px; border-radius: 0 0 3px 3px; background: #696969; }
.t1 { height: 533px; }
.t1 i { height: 218px; }
.t2 i { height: 216px; }
.langs { margin-left: 20px; width: 148px; flex: none; border-left: 3px solid #dedede; padding-left: 7px; }
.langs ul { margin-top: -20px; }
.langs li { width: 137px; height: 28px; margin-bottom: 14px; display: flex; font-weight: 700; line-height: 28px; color: #212224; }
.langs li svg { width: 20px; height: 20px; margin: 5px 3.700px 0 0; }
.asp { font: bold 7px "Liberation Sans", sans-serif; fill: #fff; }
.cs { font: 8px "Open Sans", sans-serif; fill: #fff; }
.fo { font: bold 18px "DejaVu Serif", serif; fill: #111; }
.go { font: bold 8.500px "Liberation Sans", sans-serif; fill: #25b5d8; stroke: #25b5d8; stroke-width: .5px; }
.ju { font: bold 8.500px/1 "Open Sans", sans-serif; fill: #333; letter-spacing: -1px; }

.comments { margin-left: 2px; width: 556px; flex: none; }
.acts { height: 30px; padding-left: 48px; display: grid; grid-template-columns: 138px 76px 25px 19px 99px 64px 70px; align-items: center; padding-bottom: 8px; }
.acts a { display: flex; align-items: center; font-weight: 700; gap: 3.500px; }
.count { display: flex; align-items: center; gap: 4.500px; font-size: 13px; padding-bottom: 3px; }
.votes { font-size: 13px; }
.down { transform: rotate(180deg); }
.blue { color: #00548b; }
.green { color: #00ab45; }
.red { color: #f20042; }
.yellow { color: #fdb813; }
.compose { margin-left: 47px; height: 152px; background: #e8e9ea; padding: 15px 15px 0; display: grid; grid-template-columns: 42px 437px; grid-template-rows: 85px auto; }
.avatar { width: 40px; height: 40px; border-radius: 50%; background: #fff; text-align: center; font: 300 24px/36px "Open Sans", sans-serif; }
.editor { border: 1px solid #c4c4c4; border-radius: 2px; background: #fff; position: relative; color: #333; }
.ebar { height: 40px; background: #fafafa; border-bottom: 1px solid #c4c4c4; padding: 0 0 1px 3px; display: grid; grid-template-columns: 139px 7px 32px 36px 32px 34px 32px 8px 32px 35px 12px 30px; align-items: center; justify-items: center; }
.ebar i { width: 1px; height: 31px; background: #c4c4c4; }
.ebar i.last { margin-left: 3px; }
.drop { width: 139px; height: 31px; border-radius: 2px; display: flex; justify-content: space-between; align-items: center; padding: 0 9px 1px; font: 13px "Liberation Sans", sans-serif; }
.hover { background: #e6e6e6; }
.dis { color: #999; }
.more { width: 30px; height: 31px; display: flex; align-items: center; justify-content: center; }
.pressed { background: #dedede; }
.etext { padding: 10px 7.500px; font-size: 13px; color: #757575; }
.popup { position: absolute; left: 193px; top: 34px; width: 239px; height: 40px; background: #fafafa; border: 1px solid #c4c4c4; box-shadow: 0 1px 2px 1px rgba(0,0,0,.15); border-radius: 2px; padding-left: 10px; display: grid; grid-template-columns: 35px 33px 25px 22px 28px 23px 34px 18px; align-items: center; }
.flip { transform: scaleX(-1); }
.btns { grid-column: 2; display: flex; justify-content: space-between; align-items: flex-start; padding: 8px 23px 0 41px; }
button { height: 29px; padding: 0 7.700px 1px; border: 0; border-radius: 3px; background: #00548b; color: #fff; font: 14px "Liberation Sans", sans-serif; }
.compose + hr { margin-top: 15px; }
.chead { height: 117px; padding-top: 20px; display: flex; align-items: flex-start; }
.chead strong { margin-left: 7px; }
.chead i { width: 8px; height: 8px; border-radius: 50%; background: #60676b; margin: 7px 0 0 4px; }
.chead time { margin-left: 9px; width: 273px; font-size: 12px; line-height: 23px; font-weight: 700; color: #6c7980; }
.badge { height: 18px; margin-top: 3px; border-radius: 4px; padding: 0 5px; background: #687980; color: #fff; font: 700 12px/17px "Open Sans", sans-serif; }
.related { width: 232px; height: 528px; border-right: 2px solid #dcdcde; border-radius: 0 0 6px 0; }
.card { width: 215px; height: 32px; background: #fff; border: 1px solid #e6e8ee; border-top: 0; border-radius: 0 0 4px 4px; padding-left: 20px; font-size: 14.800px; line-height: 18px; color: #45525e; }
.related hr { margin-top: 10px; width: 215px; background: #cfd5e2; }

.footer { height: 71px; padding: 20px 15px 0; display: flex; align-items: flex-start; color: #6a7783; }
.rights { width: 962px; color: #98a1aa; }
.footer svg { margin: 7px 3.700px 0 0; }
.footer svg:nth-of-type(2) { margin-top: 9px; }
.footer .help { margin-left: 7.500px; }
.footer a { line-height: 28px; margin-right: 12px; white-space: nowrap; }
.footer .privacy { margin: 0 0 0 auto; height: 31px; border: 1px solid #00548b; border-radius: 3px; padding: 0 8px; line-height: 29px; color: #00548b; }
.fields { display: flex; gap: 4px; }
input { width: 189px; height: 22px; border: 1px solid #767676; border-radius: 2px; padding: 1px 3px; font: 14px "Liberation Sans", sans-serif; color: #000; background: #fff; }
.scroll { width: 15px; background: #f1f1f1; display: flex; flex-direction: column; align-items: center; }
.scroll i { margin-top: 488px; width: 11px; height: 123px; background: #c1c1c1; }
.scroll b { border: 4px solid transparent; }
.up { margin-top: 5px; border-bottom-color: #505050 !important; border-top: 0 !important; height: 4px; }
.dn { margin-top: 6px; border-top-color: #a0a0a0 !important; }
```
